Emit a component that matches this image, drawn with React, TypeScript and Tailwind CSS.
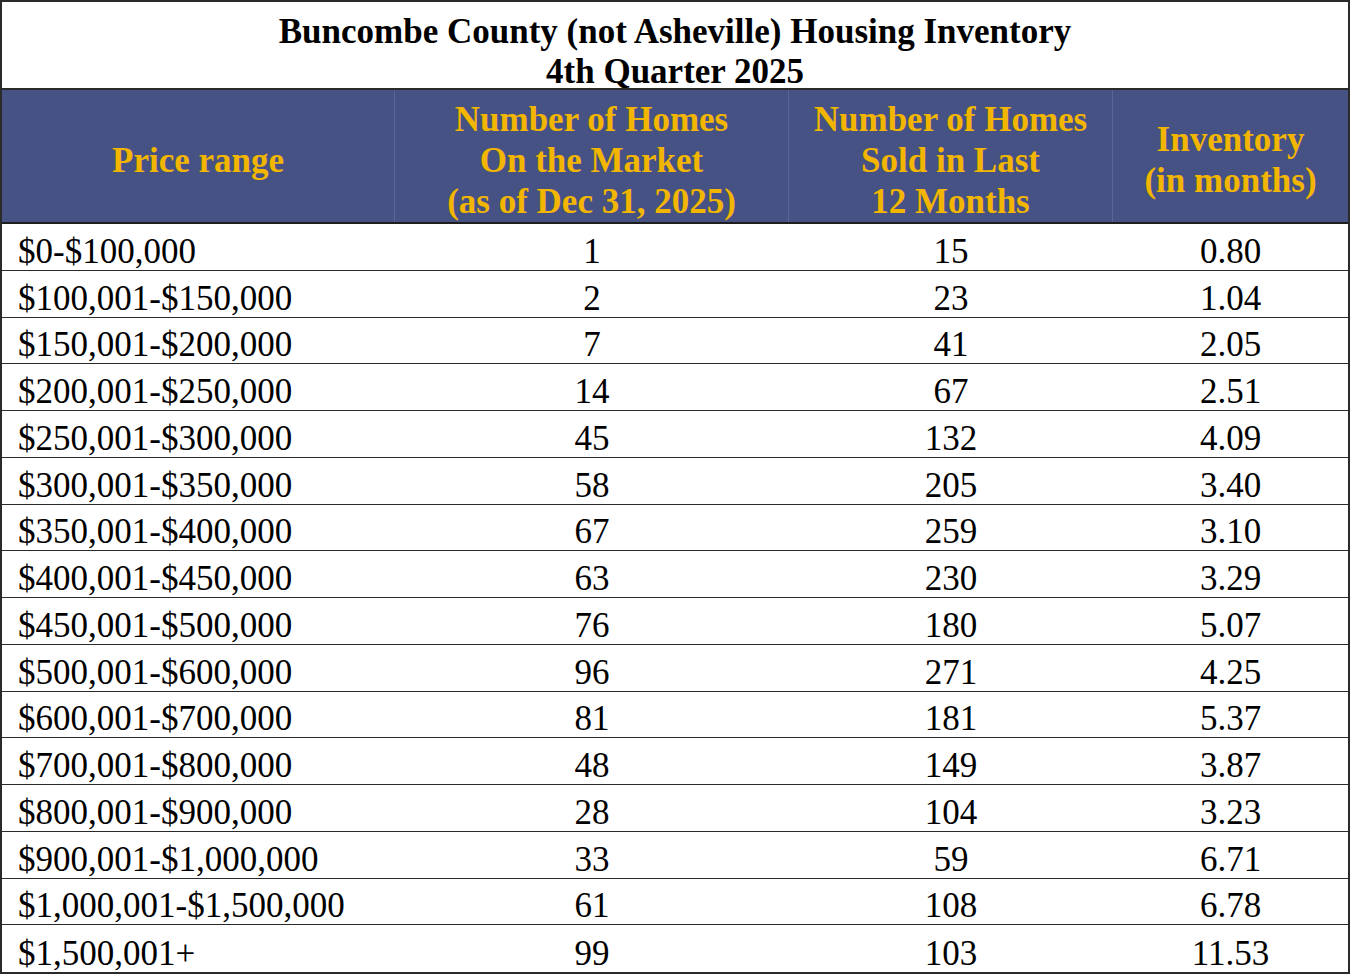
import React from 'react';

const rows: [string, string, string, string][] = [
  ['$0-$100,000', '1', '15', '0.80'],
  ['$100,001-$150,000', '2', '23', '1.04'],
  ['$150,001-$200,000', '7', '41', '2.05'],
  ['$200,001-$250,000', '14', '67', '2.51'],
  ['$250,001-$300,000', '45', '132', '4.09'],
  ['$300,001-$350,000', '58', '205', '3.40'],
  ['$350,001-$400,000', '67', '259', '3.10'],
  ['$400,001-$450,000', '63', '230', '3.29'],
  ['$450,001-$500,000', '76', '180', '5.07'],
  ['$500,001-$600,000', '96', '271', '4.25'],
  ['$600,001-$700,000', '81', '181', '5.37'],
  ['$700,001-$800,000', '48', '149', '3.87'],
  ['$800,001-$900,000', '28', '104', '3.23'],
  ['$900,001-$1,000,000', '33', '59', '6.71'],
  ['$1,000,001-$1,500,000', '61', '108', '6.78'],
  ['$1,500,001+', '99', '103', '11.53'],
];

const cols = 'grid grid-cols-[393px_394px_324px_1fr]';

const App = () => {
  return (
    <div className="w-[1350px] h-[974px] bg-white border-2 border-[#2a2a2a] font-['Liberation_Serif',serif] text-black overflow-hidden">
      <div className="h-[88px] flex flex-col items-center justify-center border-b-2 border-[#2a2a2a] font-bold text-[35px] leading-[40px] pt-[14px]">
        <div>Buncombe County (not Asheville) Housing Inventory</div>
        <div>4th Quarter 2025</div>
      </div>

      <div className={`${cols} h-[134px] bg-[#465184] text-[#f2b600] font-bold text-[35px] leading-[41px] text-center border-b-2 border-[#1e1e1e]`}>
        <div className="flex items-center justify-center border-r border-[#5b6697] pt-[8px]">Price range</div>
        <div className="flex items-center justify-center border-r border-[#5b6697] pt-[8px]">
          <div>Number of Homes<br />On the Market<br />(as of Dec 31, 2025)</div>
        </div>
        <div className="flex items-center justify-center border-r border-[#5b6697] pt-[8px]">
          <div>Number of Homes<br />Sold in Last<br />12 Months</div>
        </div>
        <div className="flex items-center justify-center pt-[8px]">
          <div>Inventory<br />(in months)</div>
        </div>
      </div>

      {rows.map((r, i) => (
        <div
          key={i}
          className={`${cols} h-[46.75px] text-[35px] leading-none items-center ${i < rows.length - 1 ? 'border-b-[1.5px] border-[#2a2a2a]' : ''}`}
        >
          <div className="pl-[16px] pt-[9px]">{r[0]}</div>
          <div className="text-center pt-[9px]">{r[1]}</div>
          <div className="text-center pt-[9px]">{r[2]}</div>
          <div className="text-center pt-[9px]">{r[3]}</div>
        </div>
      ))}
    </div>
  );
};

export default App;
